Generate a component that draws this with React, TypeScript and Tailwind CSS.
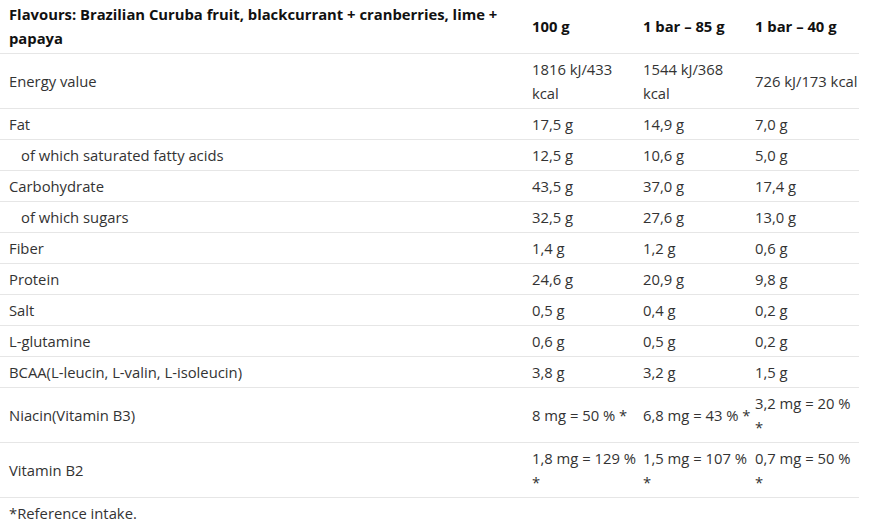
import React from "react";

type Row = { name: string; indent?: boolean; v: [string, string, string] };

const rows: Row[] = [
  { name: "Energy value", v: ["1816 kJ/433 kcal", "1544 kJ/368 kcal", "726 kJ/173 kcal"] },
  { name: "Fat", v: ["17,5 g", "14,9 g", "7,0 g"] },
  { name: "of which saturated fatty acids", indent: true, v: ["12,5 g", "10,6 g", "5,0 g"] },
  { name: "Carbohydrate", v: ["43,5 g", "37,0 g", "17,4 g"] },
  { name: "of which sugars", indent: true, v: ["32,5 g", "27,6 g", "13,0 g"] },
  { name: "Fiber", v: ["1,4 g", "1,2 g", "0,6 g"] },
  { name: "Protein", v: ["24,6 g", "20,9 g", "9,8 g"] },
  { name: "Salt", v: ["0,5 g", "0,4 g", "0,2 g"] },
  { name: "L-glutamine", v: ["0,6 g", "0,5 g", "0,2 g"] },
  { name: "BCAA(L-leucin, L-valin, L-isoleucin)", v: ["3,8 g", "3,2 g", "1,5 g"] },
  { name: "Niacin(Vitamin B3)", v: ["8 mg = 50 % *", "6,8 mg = 43 % *", "3,2 mg = 20 % *"] },
  { name: "Vitamin B2", v: ["1,8 mg = 129 % *", "1,5 mg = 107 % *", "0,7 mg = 50 % *"] },
];

export default function App() {
  return (
    <div
      className="w-[876px] h-[528px] bg-white text-[14.8px] leading-[24px] text-[#333]"
      style={{ fontFamily: '"Open Sans", "Noto Sans", sans-serif' }}
    >
      <table className="w-[859px] border-collapse table-fixed">
        <colgroup>
          <col className="w-[528px]" />
          <col className="w-[111px]" />
          <col className="w-[112px]" />
          <col className="w-[108px]" />
        </colgroup>
        <thead>
          <tr className="border-b border-[#e6e6e6] text-[#111] font-bold">
            <th className="pl-[9px] pr-[4px] pt-[2px] pb-[3px] text-left align-middle">
              Flavours: Brazilian Curuba fruit, blackcurrant + cranberries, lime + papaya
            </th>
            <th className="pl-[4px] pt-[2px] pb-[3px] text-left align-middle">100 g</th>
            <th className="pl-[4px] pt-[2px] pb-[3px] text-left align-middle">1 bar – 85 g</th>
            <th className="pl-[4px] pt-[2px] pb-[3px] text-left align-middle">1 bar – 40 g</th>
          </tr>
        </thead>
        <tbody>
          {rows.map((r) => (
            <tr key={r.name} className="border-b border-[#e6e6e6]">
              <td className={`${r.indent ? "pl-[21px]" : "pl-[9px]"} pr-[4px] py-[3px] align-middle`}>
                {r.name}
              </td>
              {r.v.map((x, i) => (
                <td key={i} className="pl-[4px] py-[3px] align-middle">
                  {x}
                </td>
              ))}
            </tr>
          ))}
        </tbody>
      </table>
      <p className="pl-[9px] mt-[3px]">*Reference intake.</p>
    </div>
  );
}
